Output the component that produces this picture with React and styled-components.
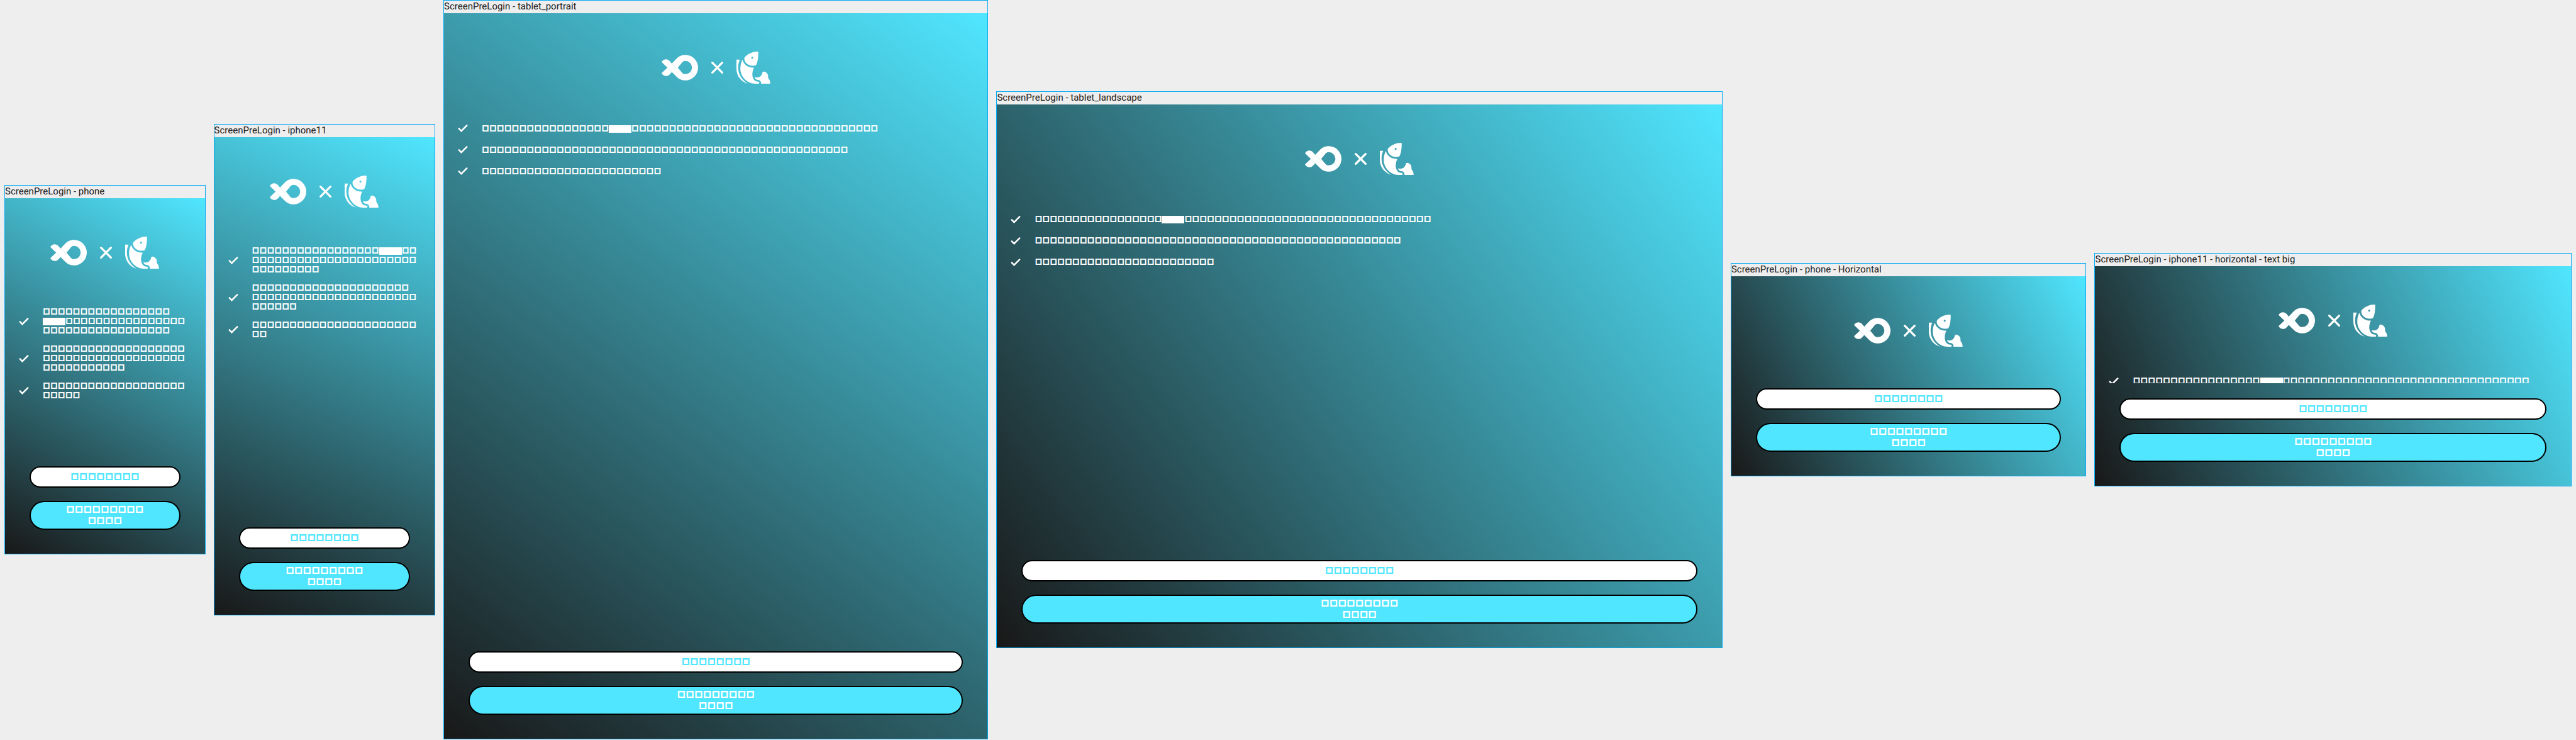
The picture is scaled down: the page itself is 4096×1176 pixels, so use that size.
import React, { Fragment } from "react";
import styled, { createGlobalStyle } from "styled-components";

const GlobalStyle = createGlobalStyle`
  * {
    box-sizing: border-box;
  }
  body {
    margin: 0;
    background: #eeeeee;
  }
`;

const Board = styled.main`
  display: flex;
  align-items: center;
  gap: 13px;
  padding: 0 7px;
`;

const Device = styled.section`
  flex: ${(p) => p.$width + 2} 1 0;
  min-width: 0;
  border: 1px solid #03a9f4;
`;

const DeviceName = styled.h2`
  height: 20px;
  margin: 0;
  color: #212121;
  font: 400 15px/19px Roboto, sans-serif;
  white-space: nowrap;
`;

const Screen = styled.div`
  display: flex;
  flex-direction: column;
  aspect-ratio: ${(p) => p.$width} / ${(p) => p.$height};
  overflow: hidden;
  background: linear-gradient(
    ${(p) => Math.atan2(p.$width, p.$height)}rad,
    #191818,
    #50e6ff
  );
`;

const Brand = styled.header`
  display: flex;
  flex: 0 1 166px;
  justify-content: center;
  align-items: flex-start;
  gap: 21px;
  min-height: 0;
  padding-top: 61px;
`;

const BrandMark = styled.svg`
  flex: none;
  width: ${(p) => p.$width}px;
  height: 51px;
  fill: #ffffff;
`;

const Benefits = styled.ul`
  flex: 1 1 0;
  min-height: 0;
  margin: 0;
  padding: 0 20px;
  overflow: hidden;
  list-style: none;
`;

const Benefit = styled.li`
  display: flex;
  align-items: center;
  gap: 20px;
  padding: 7px 0;
`;

const Check = styled.svg`
  flex: none;
  width: 20px;
  height: 20px;
  fill: none;
  stroke: #ffffff;
  stroke-width: 3;
  stroke-linecap: round;
`;

const BenefitText = styled.p`
  margin: 0;
  color: #ffffff;
  font: 900 13px/15px Inter, "DejaVu Sans", sans-serif;
`;

const Solid = styled.span`
  display: inline-block;
  width: 36px;
  height: 12px;
  background: #ffffff;
  vertical-align: -2px;
`;

const Actions = styled.footer`
  display: flex;
  flex: none;
  flex-direction: column;
  gap: 21px;
  padding: 24px 39px 38px;
`;

const ActionButton = styled.button`
  min-height: 34px;
  padding: 3px 16px;
  border: 2px solid #000000;
  border-radius: 24px;
  background: ${(p) => (p.$filled ? "#50e6ff" : "#ffffff")};
  color: ${(p) => (p.$filled ? "#ffffff" : "#50e6ff")};
  font: 900 15px/18px Inter, "DejaVu Sans", sans-serif;
  white-space: pre-line;
`;

const BOX = "□";

/* Each number is a run of boxes that stays on one line; "solid" is the filled run. */
const benefits = [
  [17, "solid", 2, 14, 8, 9],
  [19, 2, 17, 5, 6],
  [19, 3, 2],
];

const devices = [
  { name: "phone", width: 375, height: 667 },
  { name: "iphone11", width: 414, height: 896 },
  { name: "tablet_portrait", width: 1024, height: 1366 },
  { name: "tablet_landscape", width: 1366, height: 1024 },
  { name: "phone - Horizontal", width: 667, height: 375 },
  { name: "iphone11 - horizontal - text big", width: 896, height: 414 },
];

function LoopFish() {
  return (
    <BrandMark $width={58} viewBox="0 0 207 180" aria-hidden="true">
      <g transform="translate(0 18)">
        <path
          fillRule="evenodd"
          d="M58 49L45 34C34 20 10 22 0 40L33 72L0 103C10 122 34 124 46 110L58 97L88 126C101 138 116 144 135 144A72 72 0 0 0 135 0C116 0 101 6 88 18ZM92 72L110 51C117 41 124 34 135 34A37 37 0 0 1 135 109C124 109 117 103 110 93Z"
        />
        <path
          d="M58 49L92 83M33 72L58 97M167 92C167 104 175 112 187 116"
          fill="none"
          stroke="#43b4c8"
          strokeOpacity="0.5"
          strokeWidth="1.5"
        />
      </g>
    </BrandMark>
  );
}

function Cross() {
  return (
    <BrandMark $width={19} viewBox="0 0 68 180" aria-hidden="true">
      <path
        d="M6 62L62 118M62 62L6 118"
        stroke="#ffffff"
        strokeWidth="12"
        strokeLinecap="round"
      />
    </BrandMark>
  );
}

function Carp() {
  return (
    <BrandMark $width={54} viewBox="0 0 191 180" aria-hidden="true">
      <path
        fillRule="evenodd"
        d="M119 0C85 0 55 18 44 36C44 60 62 79 92 79C100 79 107 78 110 76C118 62 123 40 123 4Q123 0 119 0ZM89 28.500A5.500 5.500 0 1 1 89 39.500A5.500 5.500 0 1 1 89 28.500Z"
      />
      <path d="M34 46C40 72 66 92 99 90C92 102 88 120 90 136C93 158 106 168 122 169C130 170 131 180 124 180L104 180C62 180 22 142 22 96C22 76 26 60 34 46Z" />
      <path d="M0 45H19C11 65 9 80 10 95C12 130 32 160 64 180C25 168 0 135 0 95Z" />
      <path d="M102 142C115 150 138 146 145 122C146 112 153 111 158 113C172 116 180 130 178 146Q179 152 183 155C188 160 190 170 190 180H139C139 168 134 160 120 159C110 158 104 150 102 142Z" />
    </BrandMark>
  );
}

function PreLogin({ name, width, height }) {
  return (
    <Device $width={width}>
      <DeviceName>ScreenPreLogin - {name}</DeviceName>
      <Screen $width={width} $height={height}>
        <Brand>
          <LoopFish />
          <Cross />
          <Carp />
        </Brand>
        <Benefits>
          {benefits.map((runs, row) => (
            <Benefit key={row}>
              <Check viewBox="0 0 24 24" aria-hidden="true">
                <path d="M4.500 12.500L9 17L19.500 6.500" />
              </Check>
              <BenefitText>
                {runs.map((run, i) =>
                  run === "solid" ? (
                    <Solid key={i} />
                  ) : (
                    <Fragment key={i}>
                      {BOX.repeat(run)}
                      <wbr />
                    </Fragment>
                  )
                )}
              </BenefitText>
            </Benefit>
          ))}
        </Benefits>
        <Actions>
          <ActionButton type="button">{BOX.repeat(8)}</ActionButton>
          <ActionButton type="button" $filled>
            {`${BOX.repeat(9)}\n${BOX.repeat(4)}`}
          </ActionButton>
        </Actions>
      </Screen>
    </Device>
  );
}

export default function App() {
  return (
    <>
      <GlobalStyle />
      <Board>
        {devices.map((device) => (
          <PreLogin key={device.name} {...device} />
        ))}
      </Board>
    </>
  );
}
